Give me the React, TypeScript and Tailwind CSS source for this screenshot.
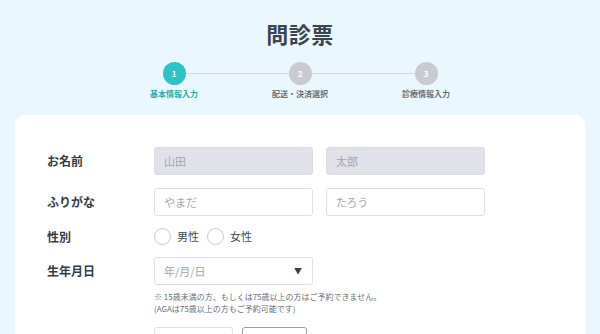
import { ReactNode } from "react";

const steps = [
  { num: "1", label: "基本情報入力", active: true },
  { num: "2", label: "配送・決済選択", active: false },
  { num: "3", label: "診療情報入力", active: false },
];

function StepItem({
  num,
  label,
  active,
  first,
  last,
}: {
  num: string;
  label: string;
  active: boolean;
  first: boolean;
  last: boolean;
}) {
  return (
    <div className="flex w-[126px] flex-col items-center">
      <div className="flex w-full items-center">
        <div className={first ? "h-px flex-1" : "h-px flex-1 bg-[#d6d8de]"} />
        <div
          className={
            active
              ? "flex h-[23px] w-[23px] items-center justify-center rounded-full bg-[#2ec2c4] text-[8px] font-bold text-white"
              : "flex h-[23px] w-[23px] items-center justify-center rounded-full bg-[#c9cbd1] text-[8px] font-bold text-white"
          }
        >
          {num}
        </div>
        <div className={last ? "h-px flex-1" : "h-px flex-1 bg-[#d6d8de]"} />
      </div>
      <span
        className={
          active
            ? "mt-[3px] text-[8px] leading-[12px] font-bold text-[#2aa9ac]"
            : "mt-[3px] text-[8px] leading-[12px] font-bold text-[#6b6e76]"
        }
      >
        {label}
      </span>
    </div>
  );
}

function Row({
  label,
  className,
  children,
}: {
  label?: string;
  className: string;
  children: ReactNode;
}) {
  return (
    <div className={`flex items-center ${className}`}>
      <div className="w-[107px] shrink-0 text-[12px] font-bold text-[#343c45]">
        {label}
      </div>
      {children}
    </div>
  );
}

function TextField({ placeholder, disabled }: { placeholder: string; disabled?: boolean }) {
  return (
    <div
      className={
        disabled
          ? "flex h-full w-[159px] items-center rounded-[3px] border border-[#d9dbe1] bg-[#e1e2e9] pl-[9px] text-[11px] text-[#a3a5ad]"
          : "flex h-full w-[159px] items-center rounded-[3px] border border-[#dfe1e6] bg-white pl-[9px] text-[11px] text-[#a3a5ad]"
      }
    >
      {placeholder}
    </div>
  );
}

function Radio({ label }: { label: string }) {
  return (
    <div className="flex items-center gap-[6px]">
      <div className="h-[17px] w-[17px] rounded-full border border-[#c8cbd2] bg-white" />
      <span className="text-[11px] text-[#444a52]">{label}</span>
    </div>
  );
}

export default function App() {
  return (
    <div
      className="flex h-[334px] w-[600px] flex-col items-center overflow-hidden bg-[#eaf8fd]"
      style={{ fontFamily: '"Noto Sans CJK JP", "Noto Sans", sans-serif' }}
    >
      <h1 className="pt-[19px] text-[22px] leading-[28px] font-bold tracking-[0.5px] text-[#3b4550]">
        問診票
      </h1>

      <div className="mt-[15px] flex">
        {steps.map((s, i) => (
          <StepItem
            key={s.num}
            num={s.num}
            label={s.label}
            active={s.active}
            first={i === 0}
            last={i === steps.length - 1}
          />
        ))}
      </div>

      <div className="mt-[15px] w-[570px] flex-1 rounded-[10px] bg-white pt-[32px] pl-[32px]">
        <Row label="お名前" className="h-[28px]">
          <div className="flex h-full gap-[13px]">
            <TextField placeholder="山田" disabled />
            <TextField placeholder="太郎" disabled />
          </div>
        </Row>

        <Row label="ふりがな" className="mt-[13px] h-[28px]">
          <div className="flex h-full gap-[13px]">
            <TextField placeholder="やまだ" />
            <TextField placeholder="たろう" />
          </div>
        </Row>

        <Row label="性別" className="mt-[12px] h-[17px]">
          <div className="flex items-center gap-[8px]">
            <Radio label="男性" />
            <Radio label="女性" />
          </div>
        </Row>

        <Row label="生年月日" className="mt-[12px] h-[28px]">
          <div className="flex h-full w-[159px] items-center justify-between rounded-[3px] border border-[#dfe1e6] bg-white pr-[10px] pl-[9px] text-[11px] text-[#a3a5ad]">
            <span>年/月/日</span>
            <span className="text-[8px] text-[#3a3f46]">▼</span>
          </div>
        </Row>

        <div className="mt-[6px] pl-[107px] text-[8px] leading-[12px] text-[#6a6e75]">
          <p>※ 15歳未満の方、もしくは75歳以上の方はご予約できません。</p>
          <p>(AGAは75歳以上の方もご予約可能です)</p>
        </div>

        <div className="mt-[12px] flex gap-[9px] pl-[107px]">
          <div className="h-[28px] w-[79px] rounded-[3px] border border-[#dfe1e6] bg-white" />
          <div className="h-[28px] w-[65px] rounded-[3px] border border-[#9a9da3] bg-white" />
        </div>
      </div>
    </div>
  );
}
